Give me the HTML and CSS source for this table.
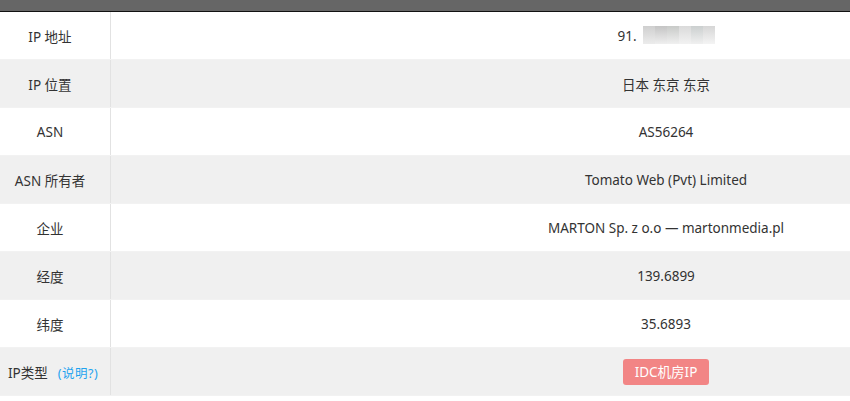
FILE: index.html
```html
<!DOCTYPE html>
<html>
<head>
  <title>IP 查询</title>
  <link rel="stylesheet" href="styles.css">
</head>
<body>
  <div class="topbar"></div>
  <div class="wrap">
    <table class="info">
      <tr>
        <td class="key">IP 地址</td>
        <td class="val">91.<span class="blur"><i></i><i></i><i></i><i></i><i></i><i></i></span></td>
      </tr>
      <tr class="alt">
        <td class="key">IP 位置</td>
        <td class="val">日本 东京 东京</td>
      </tr>
      <tr>
        <td class="key">ASN</td>
        <td class="val">AS56264</td>
      </tr>
      <tr class="alt">
        <td class="key">ASN 所有者</td>
        <td class="val">Tomato Web (Pvt) Limited</td>
      </tr>
      <tr>
        <td class="key">企业</td>
        <td class="val">MARTON Sp. z o.o — martonmedia.pl</td>
      </tr>
      <tr class="alt">
        <td class="key">经度</td>
        <td class="val">139.6899</td>
      </tr>
      <tr>
        <td class="key">纬度</td>
        <td class="val">35.6893</td>
      </tr>
      <tr class="alt">
        <td class="key type">IP类型<a class="help" href="#">(说明?)</a></td>
        <td class="val"><span class="badge">IDC机房IP</span></td>
      </tr>
    </table>
  </div>
</body>
</html>
```

FILE: styles.css
```css
body {
  margin: 0;
  padding: 0;
  font-family: "Noto Sans", "Noto Sans CJK SC", sans-serif;
  font-size: 13.5px;
  color: #333;
  background: #fff;
  overflow: hidden;
}

.topbar {
  height: 11px;
  background: #666;
  border-bottom: 1px solid #111;
}

.wrap {
  width: 850px;
  overflow: hidden;
}

.info {
  width: 1221px;
  border-collapse: collapse;
  table-layout: fixed;
}

.info td {
  height: 47px;
  padding: 0;
  text-align: center;
  border-bottom: 1px solid #f2f2f2;
}

.info tr.alt td {
  background: #f0f0f0;
}

.key {
  width: 100px;
  border-right: 1px solid #e2e2e2;
}

.info td.key {
  padding-right: 10px;
}

.info td.type {
  padding: 0 2px 0 8px;
  text-align: left;
  white-space: nowrap;
}

.help {
  color: #1fa3ef;
  font-size: 12.5px;
  letter-spacing: 0.5px;
  text-decoration: none;
  margin-left: 10px;
}

.blur {
  display: inline-flex;
  vertical-align: middle;
  margin-left: 6px;
  margin-top: -3px;
}

.blur i {
  display: block;
  width: 12px;
  height: 18px;
  background: linear-gradient(#cfcfcf, #ececec);
}

.blur i:nth-child(2) { background: linear-gradient(#c4c4c4, #efefef); }
.blur i:nth-child(3) { background: linear-gradient(#c8cac8, #f0f0f0); }
.blur i:nth-child(4) { background: linear-gradient(#dadada, #f2f2f2); }
.blur i:nth-child(5) { background: linear-gradient(#cbcfcf, #f0f0f0); }
.blur i:nth-child(6) { background: linear-gradient(#d6d6d6, #f4f4f4); }

.badge {
  display: inline-block;
  background: #f28585;
  color: #fff;
  font-size: 13.5px;
  line-height: 26px;
  padding: 0 12px;
  border-radius: 3px;
}
```
